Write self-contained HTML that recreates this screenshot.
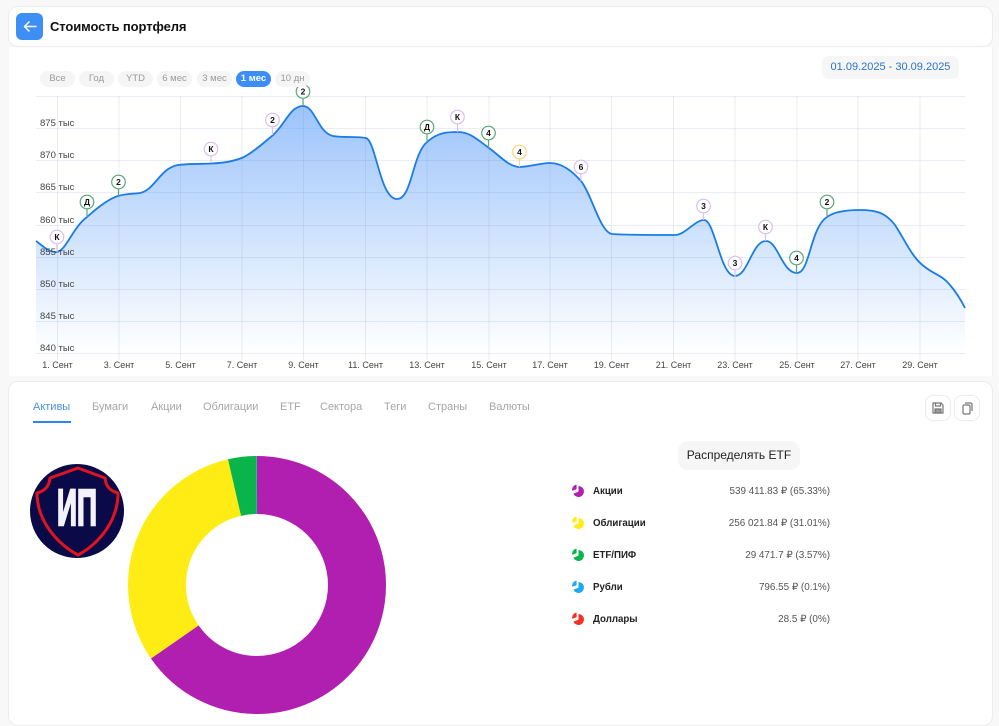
<!DOCTYPE html>
<html lang="ru"><head><meta charset="utf-8"><title>Стоимость портфеля</title>
<style>
html,body{margin:0;padding:0;width:999px;height:720px;overflow:hidden;background:#f8f8f8;font-family:"Liberation Sans",sans-serif}
.a{position:absolute}
.card{position:absolute;background:#fff;box-sizing:border-box}
.pill{position:absolute;top:71px;height:16px;width:35px;border-radius:8px;background:#f5f5f5;color:#9a9a9a;font-size:9.5px;line-height:16px;text-align:center}
.tab{position:absolute;top:400px;font-size:11px;line-height:14px;color:#a6a6a6}
.lab{position:absolute;left:593px;font-size:9.7px;font-weight:bold;color:#222;line-height:12px}
.val{position:absolute;right:169px;font-size:9.9px;color:#555;line-height:12px;white-space:nowrap}
.ib{position:absolute;top:395px;width:26px;height:26px;box-sizing:border-box;border:1px solid #ececec;border-radius:8px;background:#fff}
svg text{font-family:"Liberation Sans",sans-serif}
</style></head><body>
<div class="card" style="left:8px;top:6px;width:985px;height:41px;border:1px solid #ececec;border-radius:10px"></div>
<div class="card" style="left:9px;top:47px;width:984px;height:329px;border-right:1px solid #f0f0f0"></div>
<div class="card" style="left:8px;top:381px;width:985px;height:345px;border:1px solid #ececec;border-radius:10px"></div>

<div class="a" style="left:16px;top:13px;width:27px;height:27px;border-radius:6px;background:#3d8ff5">
<svg width="27" height="27" viewBox="0 0 27 27"><path d="M20 13.5H8.5M13 9l-4.5 4.5L13 18" fill="none" stroke="#fff" stroke-width="1.5" stroke-linecap="round" stroke-linejoin="round"/></svg></div>
<div class="a" style="left:50px;top:18px;font-size:13px;letter-spacing:-.1px;line-height:18px;font-weight:bold;color:#111;white-space:nowrap">Стоимость портфеля</div>

<svg class="a" style="left:0;top:0" width="999" height="380" viewBox="0 0 999 380">
<defs><linearGradient id="g" x1="0" y1="106" x2="0" y2="353" gradientUnits="userSpaceOnUse"><stop offset="0" stop-color="#9cc4fb"/><stop offset="1" stop-color="#9cc4fb" stop-opacity="0"/></linearGradient></defs>
<path fill="url(#g)" d="M36 241C43 246 48 252 56 252C66 252 72 228 87 217C97 208 108 199 118 196C126 193.5 133 194 140 193C155 190 160 168 178 165C190 163.5 205 164 211 163.5C225 163 235 161 244 157C255 151 262 144 272 136C285 125 290 106 303 106C315 106 318 133 333 136C345 138 355 136 366 138C376 141 380 199 397 199C412 199 412 155 427 142C438 132 448 132 458 132C470 132 478 140 489 148C500 156 508 166 519 167C530 167 540 163 550 163C562 163 572 171 581 181C592 195 600 232 612 234C625 235 660 235 675 235C685 235 695 220 704 220C715 220 720 276 735 276C748 276 752 241 766 241C778 241 782 273 797 273C810 273 810 228 827 217C835 211 850 210 860 210C875 210 885 212 895 225C905 240 912 258 925 267C935 275 942 275 950 285C956 292 961 300 965 308V353H36Z"/>
<g stroke="#7f8fb0" stroke-opacity=".17" stroke-width="1" fill="none">
<path d="M36 96.5H965M36 128.5H965M36 160.5H965M36 192.5H965M36 225.5H965M36 257.5H965M36 289.5H965M36 321.5H965M36 353.5H965"/>
<path d="M57.5 96V360M119 96V360M180.5 96V360M242 96V360M303.5 96V360M365.5 96V360M427 96V360M489 96V360M550 96V360M611.5 96V360M673.5 96V360M735 96V360M797 96V360M858 96V360M920 96V360"/>
</g>
<path fill="none" stroke="#1a7ce6" stroke-width="1.8" d="M36 241C43 246 48 252 56 252C66 252 72 228 87 217C97 208 108 199 118 196C126 193.5 133 194 140 193C155 190 160 168 178 165C190 163.5 205 164 211 163.5C225 163 235 161 244 157C255 151 262 144 272 136C285 125 290 106 303 106C315 106 318 133 333 136C345 138 355 136 366 138C376 141 380 199 397 199C412 199 412 155 427 142C438 132 448 132 458 132C470 132 478 140 489 148C500 156 508 166 519 167C530 167 540 163 550 163C562 163 572 171 581 181C592 195 600 232 612 234C625 235 660 235 675 235C685 235 695 220 704 220C715 220 720 276 735 276C748 276 752 241 766 241C778 241 782 273 797 273C810 273 810 228 827 217C835 211 850 210 860 210C875 210 885 212 895 225C905 240 912 258 925 267C935 275 942 275 950 285C956 292 961 300 965 308"/>
<g font-size="9.5" fill="#444">
<text x="40" y="126">875 тыс</text><text x="40" y="158">870 тыс</text><text x="40" y="190">865 тыс</text><text x="40" y="223">860 тыс</text><text x="40" y="255">855 тыс</text><text x="40" y="287">850 тыс</text><text x="40" y="319">845 тыс</text><text x="40" y="351">840 тыс</text>
</g>
<g font-size="9" fill="#444" text-anchor="middle">
<text x="57.5" y="368">1. Сент</text><text x="119" y="368">3. Сент</text><text x="180.5" y="368">5. Сент</text><text x="242" y="368">7. Сент</text><text x="303.5" y="368">9. Сент</text><text x="365.5" y="368">11. Сент</text><text x="427" y="368">13. Сент</text><text x="489" y="368">15. Сент</text><text x="550" y="368">17. Сент</text><text x="611.5" y="368">19. Сент</text><text x="673.5" y="368">21. Сент</text><text x="735" y="368">23. Сент</text><text x="797" y="368">25. Сент</text><text x="858" y="368">27. Сент</text><text x="920" y="368">29. Сент</text>
</g>
<g fill="none" stroke-width="1.2">
<g stroke="#d9bff0"><path d="M57 244V252M211 156V163M272.5 127V135M457.5 124V132M581 174V181M703.5 213V220M735 270V277M765.5 234V241"/></g>
<g stroke="#5aa877"><path d="M87 209V217M118.5 189V196M303 99V106M427 134V142M488.5 140V148M796.5 265V273M827 209V217"/></g>
<path stroke="#ffd27f" d="M519.5 159V167"/>
</g>
<g fill="#fff" stroke-width="1.2">
<g stroke="#d9bff0"><circle cx="57" cy="237" r="6.8"/><circle cx="211" cy="149" r="6.8"/><circle cx="272.5" cy="120" r="6.8"/><circle cx="457.5" cy="117" r="6.8"/><circle cx="581" cy="167" r="6.8"/><circle cx="703.5" cy="206" r="6.8"/><circle cx="735" cy="263" r="6.8"/><circle cx="765.5" cy="227" r="6.8"/></g>
<g stroke="#5aa877"><circle cx="87" cy="202" r="6.8"/><circle cx="118.5" cy="182" r="6.8"/><circle cx="303" cy="91.5" r="6.8"/><circle cx="427" cy="127" r="6.8"/><circle cx="488.5" cy="133" r="6.8"/><circle cx="796.5" cy="258" r="6.8"/><circle cx="827" cy="202" r="6.8"/></g>
<circle stroke="#ffd27f" cx="519.5" cy="152" r="6.8"/>
</g>
<g font-size="8.5" font-weight="bold" fill="#111" text-anchor="middle">
<text x="57" y="240">К</text><text x="87" y="205">Д</text><text x="118.5" y="185">2</text><text x="211" y="152">К</text><text x="272.5" y="123">2</text><text x="303" y="94.5">2</text><text x="427" y="130">Д</text><text x="457.5" y="120">К</text><text x="488.5" y="136">4</text><text x="519.5" y="155">4</text><text x="581" y="170">6</text><text x="703.5" y="209">3</text><text x="735" y="266">3</text><text x="765.5" y="230">К</text><text x="796.5" y="261">4</text><text x="827" y="205">2</text>
</g>
</svg>

<div class="pill" style="left:40px">Все</div><div class="pill" style="left:79px">Год</div><div class="pill" style="left:118px">YTD</div><div class="pill" style="left:157px">6 мес</div><div class="pill" style="left:197px">3 мес</div><div class="pill" style="left:236px;background:#3a8ef6;color:#fff;font-weight:bold">1 мес</div><div class="pill" style="left:275px">10 дн</div>

<div class="a" style="left:822px;top:56px;width:137px;height:23px;border-radius:7px;background:#f6f6f6;color:#2a74c8;font-size:11px;line-height:23px;text-align:center;white-space:nowrap">01.09.2025 - 30.09.2025</div>

<div class="tab" style="left:33px;color:#4a8fe0">Активы</div><div class="a" style="left:33px;top:421px;width:38px;height:2px;background:#2a86f0"></div>
<div class="tab" style="left:92px">Бумаги</div><div class="tab" style="left:151px">Акции</div><div class="tab" style="left:203px">Облигации</div><div class="tab" style="left:280px">ETF</div><div class="tab" style="left:320px">Сектора</div><div class="tab" style="left:384px">Теги</div><div class="tab" style="left:428px">Страны</div><div class="tab" style="left:489px">Валюты</div>

<div class="ib" style="left:925px"><svg width="24" height="24" viewBox="0 0 24 24" fill="none" stroke="#777" stroke-width="1.2"><path d="M7 7h8l2 2v8H7zM9.5 7v3h5V7"/><path d="M9 13h6v4H9z" fill="#999"/></svg></div>
<div class="ib" style="left:954px"><svg width="24" height="24" viewBox="0 0 24 24" fill="none" stroke="#777" stroke-width="1.2"><rect x="8" y="9" width="7" height="9" rx="1.2"/><path d="M10 7h5.5A1.5 1.5 0 0 1 17 8.5V15"/></svg></div>

<svg class="a" style="left:28px;top:462px" width="98" height="98" viewBox="28 462 98 98">
<circle cx="77" cy="511" r="47" fill="#0a0a48"/>
<path d="M78 468L105 478Q106 490 118 493C118 520 100 543 78 555C56 543 37 520 37 493Q49 490 50 478Z" fill="none" stroke="#e0141e" stroke-width="3" stroke-linejoin="round"/>
<text x="57" y="525" font-size="51" font-weight="bold" fill="#f2f2f8" stroke="#f2f2f8" stroke-width="2.4" textLength="40" lengthAdjust="spacingAndGlyphs">ИП</text>
</svg>

<svg class="a" style="left:128px;top:456px" width="258" height="258" viewBox="0 0 258 258">
<g transform="translate(129 129) rotate(-90) scale(1)" fill="none" stroke-width="58">
<circle r="100" stroke="#b01fb0" stroke-dasharray="410.5 628.32"/>
<circle r="100" stroke="#ffec14" stroke-dasharray="194.85 628.32" stroke-dashoffset="-410.5"/>
<circle r="100" stroke="#09b54b" stroke-dasharray="22.43 628.32" stroke-dashoffset="-605.35"/>
<circle r="100" stroke="#39a8e8" stroke-dasharray="0.6 628.32" stroke-dashoffset="-627.72"/>
</g></svg>

<div class="a" style="left:678px;top:441px;width:122px;height:29px;border-radius:10px;background:#f6f6f6;color:#222;font-size:12px;line-height:29px;text-align:center;white-space:nowrap">Распределять ETF</div>

<svg class="a" style="left:572px;top:484px" width="13" height="142" viewBox="0 0 13 142">
<defs><g id="p"><path d="M6.5 2A5.5 5.5 0 1 1 1.4 9.6L6.5 7.6Z"/><path d="M4.6 0.6V5.2L0.2 6.8A5.2 5.2 0 0 1 4.6 0.6Z"/></g></defs>
<use href="#p" y="0" fill="#b01fb0"/><use href="#p" y="32" fill="#ffec14"/><use href="#p" y="64" fill="#09b54b"/><use href="#p" y="96" fill="#1fa9f5"/><use href="#p" y="128" fill="#f5322a"/>
</svg>

<div class="lab" style="top:486px">Акции</div><div class="val" style="top:486px">539 411.83 ₽ (65.33%)</div>
<div class="lab" style="top:518px">Облигации</div><div class="val" style="top:518px">256 021.84 ₽ (31.01%)</div>
<div class="lab" style="top:550px">ETF/ПИФ</div><div class="val" style="top:550px">29 471.7 ₽ (3.57%)</div>
<div class="lab" style="top:582px">Рубли</div><div class="val" style="top:582px">796.55 ₽ (0.1%)</div>
<div class="lab" style="top:614px">Доллары</div><div class="val" style="top:614px">28.5 ₽ (0%)</div>
</body></html>
